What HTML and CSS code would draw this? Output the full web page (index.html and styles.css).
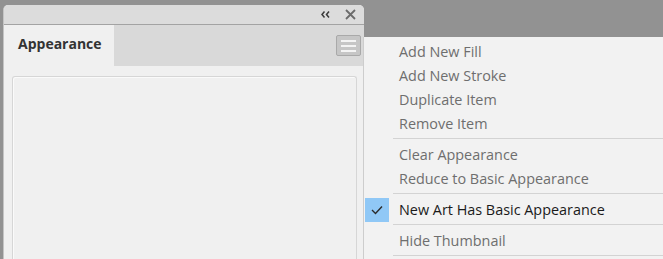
FILE: index.html
```html
<!DOCTYPE html>
<html lang="en">
<head>
    <meta charset="UTF-8">
    <meta name="viewport" content="width=device-width, initial-scale=1.0">
    <title>Appearance Panel</title>
    <link rel="stylesheet" href="styles.css">
</head>
<body>
    <div class="panel">
        <div class="titlebar">
            <svg class="collapse-btn" width="9" height="7" viewBox="0 0 9 7">
                <path d="M3.5 0.5 L1 3.5 L3.5 6.5 M8 0.5 L5.5 3.5 L8 6.5" fill="none" stroke="#3c3c3c" stroke-width="1.5"/>
            </svg>
            <svg class="close-btn" width="11" height="11" viewBox="0 0 11 11">
                <path d="M1 1 L10 10 M10 1 L1 10" stroke="#6b6b6b" stroke-width="1.8"/>
            </svg>
        </div>
        <div class="tab-row">
            <div class="tab">Appearance</div>
            <div class="menu-btn">
                <span></span><span></span><span></span>
            </div>
        </div>
        <div class="panel-body">
            <div class="preview-box"></div>
        </div>
    </div>

    <div class="flyout">
        <div class="menu-item">Add New Fill</div>
        <div class="menu-item">Add New Stroke</div>
        <div class="menu-item">Duplicate Item</div>
        <div class="menu-item">Remove Item</div>
        <div class="separator"></div>
        <div class="menu-item">Clear Appearance</div>
        <div class="menu-item">Reduce to Basic Appearance</div>
        <div class="separator"></div>
        <div class="menu-item checked">
            <span class="check">
                <svg width="12" height="10" viewBox="0 0 12 10">
                    <path d="M1 5 L4.5 8.5 L11 1.5" fill="none" stroke="#2b2b2b" stroke-width="1.4"/>
                </svg>
            </span>
            New Art Has Basic Appearance
        </div>
        <div class="separator"></div>
        <div class="menu-item">Hide Thumbnail</div>
        <div class="separator"></div>
    </div>
</body>
</html>
```

FILE: styles.css
```css
/* Reset default browser styles */
body, html {
    margin: 0;
    padding: 0;
    font-family: 'Open Sans', 'Noto Sans', sans-serif;
    height: 259px;
    overflow: hidden;
}

body {
    background-color: #929292;
    position: relative;
    padding-top: 5px;
    box-sizing: border-box;
}

.panel {
    margin-left: 3px;
    width: 361px;
    height: 254px;
    background-color: #f0f0f0;
    border-radius: 5px 5px 0 0;
    border-left: 1px solid #c4c4c4;
    box-sizing: border-box;
    display: flex;
    flex-direction: column;
    overflow: hidden;
}

.titlebar {
    height: 20px;
    flex: none;
    background-color: #dcdcdc;
    border-bottom: 1px solid #a3a3a3;
    box-sizing: border-box;
    display: flex;
    align-items: center;
    justify-content: flex-end;
    padding-right: 8px;
    gap: 15px;
}

.collapse-btn,
.close-btn {
    display: block;
}

.tab-row {
    height: 41px;
    flex: none;
    background-color: #d9d9d9;
    display: flex;
    align-items: flex-start;
}

.tab {
    width: 110px;
    height: 41px;
    background-color: #f0f0f0;
    box-sizing: border-box;
    padding: 9px 0 0 14px;
    font-size: 14px;
    font-weight: bold;
    color: #333;
}

.menu-btn {
    margin: 10px 0 0 auto;
    margin-right: 3px;
    width: 25px;
    height: 21px;
    box-sizing: border-box;
    background-color: #c6c6c6;
    border: 1px solid #a9a9a9;
    border-radius: 2px;
    display: flex;
    flex-direction: column;
    justify-content: center;
    align-items: center;
    gap: 3px;
}

.menu-btn span {
    display: block;
    width: 15px;
    height: 2px;
    background-color: #f4f4f4;
}

.panel-body {
    flex: 1;
    padding: 10px 7px 0 8px;
}

.preview-box {
    height: 100%;
    border: 1px solid #d6d6d6;
    border-bottom: none;
    border-radius: 3px 3px 0 0;
    background-color: #f0f0f0;
    box-shadow: inset 1px 1px 0 #fafafa;
}

/* Flyout menu sits over the panel */
.flyout {
    position: absolute;
    left: 363px;
    top: 37px;
    right: 0;
    bottom: 0;
    background-color: #f2f2f2;
    border-left: 1px solid #cdcdcd;
    padding-top: 3px;
}

.menu-item {
    height: 24px;
    line-height: 24px;
    padding-left: 35px;
    font-size: 14.4px;
    color: #6e6e6e;
    position: relative;
    white-space: nowrap;
}

.menu-item.checked {
    color: #1a1a1a;
}

.check {
    position: absolute;
    left: 1px;
    top: 0;
    width: 24px;
    height: 24px;
    background-color: #90c8f6;
    display: flex;
    align-items: center;
    justify-content: center;
}

.separator {
    height: 1px;
    background-color: #d3d3d3;
    margin: 2px 0 4px 29px;
}
```
